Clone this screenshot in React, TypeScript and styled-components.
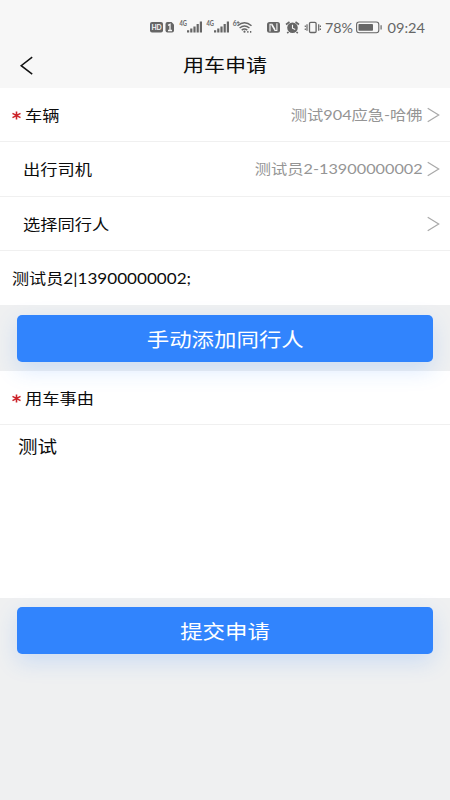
import React from "react";
import styled, { createGlobalStyle } from "styled-components";

const GlobalStyle = createGlobalStyle`
  * { box-sizing: border-box; }
  body { margin: 0; background: #eff0f1; }
`;

const Page = styled.main`
  width: 450px;
  height: 800px;
  overflow: hidden;
  display: flex;
  flex-direction: column;
  background: #eff0f1;
  color: #0c0c0c;
  font-family: "Noto Sans CJK SC", sans-serif;
`;

const StatusBar = styled.div`
  height: 44px;
  flex: none;
  background: #f7f7f7;
`;

const Header = styled.header`
  height: 44px;
  flex: none;
  display: grid;
  grid-template-columns: 60px 1fr 60px;
  align-items: center;
  background: #f7f7f7;
`;

const BackButton = styled.button`
  border: 0;
  padding: 0 0 0 19px;
  background: none;
  display: flex;
`;

type Origin = "left" | "center" | "right";

/* Wide lettering: glyphs are stretched horizontally from one side. */
const Wide = styled.span<{ $size: number; $stretch?: number; $origin?: Origin }>`
  display: block;
  white-space: nowrap;
  font-size: ${(p) => p.$size}px;
  line-height: 24px;
  transform: scaleX(${(p) => p.$stretch ?? 1.15});
  transform-origin: ${(p) => p.$origin ?? "left"} center;
`;

const Title = styled(Wide)`
  margin: 0 0 4px;
  font-weight: 400;
  text-align: center;
`;

const Row = styled.div<{ $height?: number; $last?: boolean }>`
  height: ${(p) => p.$height ?? 54}px;
  flex: none;
  display: flex;
  align-items: center;
  padding: 0 10px 0 12px;
  background: #fff;
  border-bottom: ${(p) => (p.$last ? "0" : "1px solid #f0f0f0")};
`;

const Mark = styled.span<{ $width?: number }>`
  width: ${(p) => p.$width ?? 11}px;
  flex: none;
  display: flex;
  padding-top: 1px;
`;

const Value = styled(Wide)`
  margin-left: auto;
  margin-right: 3px;
  color: #959595;
  font-family: Lato, "Noto Sans CJK SC", sans-serif;
`;

const Companion = styled(Wide)`
  font-family: Lato, "Noto Sans CJK SC", sans-serif;
`;

const ChevronBox = styled.span<{ $push?: boolean }>`
  display: flex;
  margin-left: ${(p) => (p.$push ? "auto" : "0")};
`;

/* Stacked above its neighbours so that the button's glow falls on them. */
const ButtonBand = styled.div<{ $height: number; $top: number }>`
  position: relative;
  z-index: 1;
  height: ${(p) => p.$height}px;
  flex: none;
  padding: ${(p) => p.$top}px 17px 0;
`;

const PrimaryButton = styled.button`
  width: 100%;
  height: 47px;
  padding: 0;
  border: 0;
  border-radius: 5px;
  display: flex;
  align-items: center;
  justify-content: center;
  color: #fff;
  background: #3184fd;
  box-shadow: 0 8px 22px rgba(49, 132, 253, 0.18);
  font-family: inherit;
`;

const ReasonPanel = styled.section`
  height: 227px;
  flex: none;
  background: #fff;
`;

const Reason = styled.div`
  padding: 9px 18px;
`;

const Chevron = ({ push }: { push?: boolean }) => (
  <ChevronBox $push={push}>
    <svg width="14" height="16" viewBox="0 0 14 16" fill="none" stroke="#a9a9a9" strokeWidth="1.2">
      <path d="M1.7 1.3 12.7 8 1.7 14.7" />
    </svg>
  </ChevronBox>
);

const Asterisk = () => (
  <svg width="9" height="9" viewBox="0 0 9 9" stroke="#cc2228" strokeWidth="1.6">
    <path d="M4.5.5v8M.5 2.4l8 4.2M.5 6.6l8-4.2" />
  </svg>
);

const StatusIcons = () => (
  <svg width="450" height="44" viewBox="0 0 450 44" fill="#666" fontFamily="Lato, sans-serif">
    <rect x="150" y="22" width="13" height="10.5" rx="2" />
    <text x="151.4" y="30" fontSize="7.5" fontWeight="700" fill="#f7f7f7" textLength="10.4" lengthAdjust="spacingAndGlyphs">HD</text>
    <path d="M167.5 22h4l2.5 2.5v6a2 2 0 0 1-2 2h-4.5a2 2 0 0 1-2-2V24a2 2 0 0 1 2-2z" />
    <path d="M168 25.3l2-1v6.2m-2 0h4" fill="none" stroke="#f7f7f7" strokeWidth="1.3" />
    {[0, 27].map((x) => (
      <g key={x} transform={`translate(${x} 0)`}>
        <text x="179.5" y="26" fontSize="6.6" fontWeight="700" textLength="7.5" lengthAdjust="spacingAndGlyphs">4G</text>
        <path d="M187 30.200h2.200v2.200H187zM190.200 28.500h2.200v3.900h-2.200zM193.400 26.500h2.200v5.900h-2.200zM196.600 24h2.200v8.400h-2.200zM199.800 21.500h2.200v10.900h-2.200z" />
      </g>
    ))}
    <text x="232.7" y="26" fontSize="6.8" fontWeight="700">6</text>
    <path d="M236.6 22.5h3m-1.500-1.500v3" stroke="#666" strokeWidth=".8" />
    <g fill="none" stroke="#666" strokeWidth="1.5">
      <path d="M237.500 25.800q7-6 14 0M239.600 28q4.900-3.800 9.800 0M241.700 30.100q2.800-2 5.600 0" />
    </g>
    <circle cx="244.500" cy="31.700" r="1.1" />
    <path d="M247.200 30.900h1.300v1.800h-1.300zM250 30.900h1.300v1.800H250z" />
    <rect x="267" y="22" width="13" height="10.800" rx="2.500" />
    <path d="M270 31.500v-7.200l2-.1 3.200 5.600M276.900 23.200v7.200l-2 .1-3.200-5.600" fill="none" stroke="#f7f7f7" strokeWidth="1.1" />
    <circle cx="292.500" cy="27.800" r="5.300" />
    <path d="M286 24.500l3.500-2.500M295.500 22l3.500 2.500M288.500 32l-1.300 1.200M296.500 32l1.300 1.200" stroke="#666" strokeWidth="1.6" />
    <path d="M292.500 24.700v3.500l2.700 1.300" fill="none" stroke="#f7f7f7" strokeWidth="1.1" />
    <g fill="none" stroke="#666" strokeWidth="1.3">
      <rect x="309.500" y="22.300" width="6.600" height="10.200" rx="1.2" />
      <path d="M307 24.300v6.400M318.700 24.300v6.400M305.300 25.500v1.500M305.300 28.500v1.500M320.400 25.500v1.500M320.400 28.500v1.500" strokeWidth="1.2" />
    </g>
    <text x="325" y="32.5" fontSize="14" textLength="28" lengthAdjust="spacingAndGlyphs">78%</text>
    <rect x="356.6" y="22" width="22.2" height="10.8" rx="2.5" fill="none" stroke="#666" strokeWidth="1.1" />
    <rect x="358.5" y="24" width="14.5" height="6.8" rx=".8" />
    <path d="M380.500 25.200h1.200v4.400h-1.200z" />
    <text x="387.500" y="32.5" fontSize="14" textLength="37.5" lengthAdjust="spacingAndGlyphs">09:24</text>
  </svg>
);

export default function App() {
  return (
    <>
      <GlobalStyle />
      <Page>
        <StatusBar><StatusIcons /></StatusBar>
        <Header>
          <BackButton aria-label="返回">
            <svg width="15" height="20" viewBox="0 0 15 20" fill="none" stroke="#111" strokeWidth="1.5">
              <path d="M13.2 1.200 2.200 9.700l11 8.500" />
            </svg>
          </BackButton>
          <Title as="h1" $size={18} $stretch={1.17} $origin="center">用车申请</Title>
        </Header>
        <Row>
          <Mark $width={12.5}><Asterisk /></Mark>
          <Wide $size={15}>车辆</Wide>
          <Value $size={14} $origin="right" $stretch={1.16}>测试904应急-哈佛</Value>
          <Chevron />
        </Row>
        <Row $height={55}>
          <Mark />
          <Wide $size={15}>出行司机</Wide>
          <Value $size={14} $origin="right" $stretch={1.16}>测试员2-13900000002</Value>
          <Chevron />
        </Row>
        <Row>
          <Mark />
          <Wide $size={15}>选择同行人</Wide>
          <Chevron push />
        </Row>
        <Row $last>
          <Companion $size={15} $stretch={1.14}>测试员2|13900000002;</Companion>
        </Row>
        <ButtonBand $height={66} $top={10}>
          <PrimaryButton><Wide $size={19.5} $origin="center">手动添加同行人</Wide></PrimaryButton>
        </ButtonBand>
        <ReasonPanel>
          <Row>
            <Mark $width={12.5}><Asterisk /></Mark>
            <Wide $size={15}>用车事由</Wide>
          </Row>
          <Reason><Wide $size={17}>测试</Wide></Reason>
        </ReasonPanel>
        <ButtonBand $height={202} $top={9}>
          <PrimaryButton><Wide $size={19.5} $origin="center">提交申请</Wide></PrimaryButton>
        </ButtonBand>
      </Page>
    </>
  );
}
